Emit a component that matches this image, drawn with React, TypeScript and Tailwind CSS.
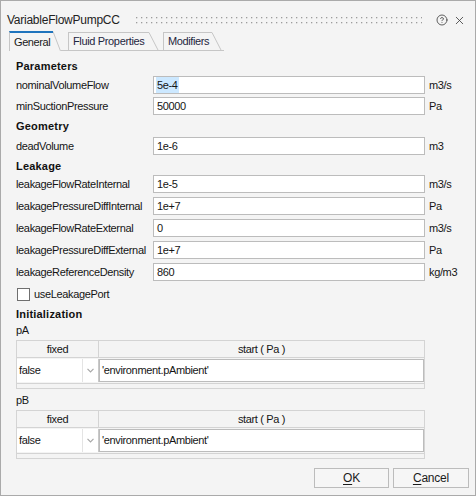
import { CircleHelp, X } from "lucide-react";

const rowsParams = [
  { label: "nominalVolumeFlow", value: "5e-4", unit: "m3/s", selected: true },
  { label: "minSuctionPressure", value: "50000", unit: "Pa" },
];

const rowsLeak = [
  { label: "leakageFlowRateInternal", value: "1e-5", unit: "m3/s" },
  { label: "leakagePressureDiffInternal", value: "1e+7", unit: "Pa" },
  { label: "leakageFlowRateExternal", value: "0", unit: "m3/s" },
  { label: "leakagePressureDiffExternal", value: "1e+7", unit: "Pa" },
  { label: "leakageReferenceDensity", value: "860", unit: "kg/m3" },
];

type Row = { label: string; value: string; unit: string; selected?: boolean };

function Field({ row }: { row: Row }) {
  return (
    <div className="flex h-[18px] items-center">
      <div className="w-[137px] whitespace-nowrap">{row.label}</div>
      <div className="flex h-[18px] w-[272px] items-center border border-[#bcbcbc] bg-white pl-[2px]">
        <span className={row.selected ? "bg-[#cce8ff] px-[1px]" : "px-[1px]"}>{row.value}</span>
      </div>
      <div className="ml-[4px]">{row.unit}</div>
    </div>
  );
}

function Heading({ children }: { children: string }) {
  return <div className="flex h-[16px] items-center text-[11px] font-bold tracking-[0.2px] text-[#111]">{children}</div>;
}

function Diagonal({ w, h, bottom }: { w: number; h: number; bottom?: boolean }) {
  return (
    <svg width={w} height={h} className="block shrink-0">
      <line x1="0" y1="0.5" x2={w - 0.5} y2={h} stroke="#c6c6c6" strokeWidth="1" />
      {bottom && <line x1="0" y1={h - 0.5} x2={w} y2={h - 0.5} stroke="#c6c6c6" strokeWidth="1" />}
    </svg>
  );
}

function InitTable() {
  return (
    <div className="w-[409px] border border-[#d4d4d4] bg-[#f4f4f4]">
      <div className="flex h-[17px] border-b border-[#d4d4d4]">
        <div className="flex w-[82px] items-center justify-center border-r border-[#d4d4d4]">fixed</div>
        <div className="flex flex-1 items-center justify-center">start ( Pa )</div>
      </div>
      <div className="flex h-[26px] border-b border-[#d4d4d4] py-[1px]">
        <div className="flex w-[65px] items-center bg-white pl-[2px]">false</div>
        <div className="flex w-[16px] items-center justify-center border-l border-[#e4e4e4] bg-white">
          <svg width="7" height="5" viewBox="0 0 7 5">
            <path d="M0.5 0.8 L3.5 3.8 L6.5 0.8" fill="none" stroke="#a8a8a8" strokeWidth="1.2" />
          </svg>
        </div>
        <div className="w-[1px] bg-[#c9c9c9]" />
        <div className="flex flex-1 items-center border border-[#bcbcbc] bg-white pl-[2px]">'environment.pAmbient'</div>
      </div>
      <div className="h-[4px]" />
    </div>
  );
}

export default function App() {
  return (
    <div className="flex h-[496px] w-[476px] flex-col border border-[#aaaaaa] bg-[#f4f4f4] font-['Liberation_Sans',Arial,sans-serif] text-[11px] tracking-[-0.35px] text-[#151515]">
      {/* title bar */}
      <div className="flex h-[30px] items-center pt-[8px] pl-[6px] pr-[9px]">
        <div className="text-[12px] tracking-[-0.25px] text-[#222]">VariableFlowPumpCC</div>
        <svg width="287" height="8" className="ml-[15px] block">
          <defs>
            <pattern id="grip" width="5" height="5" patternUnits="userSpaceOnUse">
              <rect x="1" y="1" width="1.3" height="1.3" fill="#9c9c9c" />
            </pattern>
          </defs>
          <rect x="0" y="0" width="287" height="8" fill="url(#grip)" />
        </svg>
        <div className="ml-auto flex items-center gap-[5px] text-[#3a3a3a]">
          <CircleHelp size={12} strokeWidth={1.6} />
          <X size={13} strokeWidth={1.5} />
        </div>
      </div>

      {/* tabs */}
      <div className="flex h-[20px] items-end pl-[8px]">
        <div className="flex h-[20px]">
          <div className="flex w-[44px] items-center border-l border-t-2 border-l-[#c6c6c6] border-t-[#1f74bd] pl-[4px] tracking-[-0.4px] text-[#1a1a1a]">
            General
          </div>
          <Diagonal w={8} h={20} />
        </div>
        <div className="h-[20px] w-[7px] border-b border-[#c6c6c6]" />
        <div className="flex h-[19px]">
          <div className="flex w-[81px] items-center border-b border-l border-t border-[#c6c6c6] pl-[4px] text-[#1e2640]">
            Fluid Properties
          </div>
          <Diagonal w={10} h={19} bottom />
        </div>
        <div className="h-[20px] w-[4px] border-b border-[#c6c6c6]" />
        <div className="flex h-[19px]">
          <div className="flex w-[49px] items-center border-b border-l border-t border-[#c6c6c6] pl-[4px] tracking-[-0.4px] text-[#1e2640]">
            Modifiers
          </div>
          <Diagonal w={10} h={19} bottom />
        </div>
        <div className="h-[20px] w-[2px] border-b border-[#c6c6c6]" />
      </div>

      {/* content */}
      <div className="flex flex-col pl-[15px] pt-[7px]">
        <Heading>Parameters</Heading>
        <div className="mt-[2px] flex flex-col gap-[3px]">
          {rowsParams.map((r) => (
            <Field key={r.label} row={r} />
          ))}
        </div>
        <div className="mt-[3px]">
          <Heading>Geometry</Heading>
        </div>
        <div className="mt-[3px]">
          <Field row={{ label: "deadVolume", value: "1e-6", unit: "m3" }} />
        </div>
        <div className="mt-[3px]">
          <Heading>Leakage</Heading>
        </div>
        <div className="mt-[1px] flex flex-col gap-[4px]">
          {rowsLeak.map((r) => (
            <Field key={r.label} row={r} />
          ))}
        </div>
        <label className="mt-[7px] flex h-[13px] items-center gap-[4px]">
          <span className="ml-[1px] h-[13px] w-[13px] border border-[#6f6f6f] bg-white" />
          <span>useLeakagePort</span>
        </label>
        <div className="mt-[5px]">
          <Heading>Initialization</Heading>
        </div>
        <div className="flex h-[16px] items-center">pA</div>
        <div className="mt-[2px]">
          <InitTable />
        </div>
        <div className="mt-[3px] flex h-[16px] items-center">pB</div>
        <div className="mt-[2px]">
          <InitTable />
        </div>
      </div>

      {/* buttons */}
      <div className="mt-[9px] flex justify-end gap-[4px] pr-[6px] text-[12px] tracking-[-0.2px]">
        <button className="h-[20px] w-[75px] border border-[#bcbcbc] bg-[#f6f6f6] text-[#1c1c1c]">
          <span className="underline underline-offset-2">O</span>K
        </button>
        <button className="h-[20px] w-[76px] border border-[#bcbcbc] bg-[#f6f6f6] text-[#1c1c1c]">
          <span className="underline underline-offset-2">C</span>ancel
        </button>
      </div>
    </div>
  );
}
